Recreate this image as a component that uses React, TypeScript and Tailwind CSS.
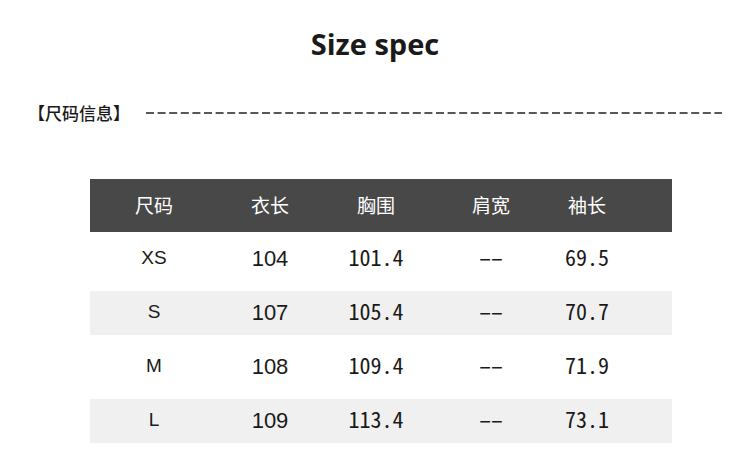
import { FC } from "react";

const rows = [
  { size: "XS", len: "104", chest: "101.4", shoulder: "––", sleeve: "69.5" },
  { size: "S", len: "107", chest: "105.4", shoulder: "––", sleeve: "70.7" },
  { size: "M", len: "108", chest: "109.4", shoulder: "––", sleeve: "71.9" },
  { size: "L", len: "109", chest: "113.4", shoulder: "––", sleeve: "73.1" },
];

const heads = ["尺码", "衣长", "胸围", "肩宽", "袖长"];

const cols = "grid grid-cols-[128px_104px_108px_122px_70px_1fr] items-center";
const num = "text-center text-[22px] leading-[30px] pb-[5px] font-['Noto_Sans_Mono_CJK_SC','Liberation_Mono',monospace]";

const App: FC = () => {
  return (
    <div className="w-[750px] h-[468px] bg-white text-[#1a1a1a] overflow-hidden">
      <h1 className="pt-[24px] text-center text-[29px] leading-[40px] font-bold font-['Open_Sans',sans-serif]">
        Size spec
      </h1>
      <div className="flex items-center mt-[36px] pl-[28px] pr-[28px]">
        <span className="text-[17px] font-medium font-['Noto_Sans_CJK_SC',sans-serif]">【尺码信息】</span>
        <svg className="flex-1 ml-[16px] h-[4px]" preserveAspectRatio="none">
          <line x1="0" y1="2" x2="100%" y2="2" stroke="#222" strokeWidth="1.3" strokeDasharray="8 3.6" />
        </svg>
      </div>
      <div className="mt-[53px] mx-[90px] w-[582px]">
        <div className={`${cols} h-[53px] bg-[#484848] text-white text-[19px] font-['Noto_Sans_CJK_SC',sans-serif]`}>
          {heads.map((h) => (
            <div key={h} className="text-center">{h}</div>
          ))}
        </div>
        {rows.map((r, i) => (
          <div key={r.size} className="h-[54px] flex items-center">
            <div className={`${cols} w-full h-[44px] ${i % 2 === 1 ? "bg-[#f0f0f0]" : ""}`}>
              <div className="text-center text-[19px] font-['Liberation_Sans',sans-serif]">{r.size}</div>
              <div className="text-center text-[22px] font-['Liberation_Sans',sans-serif]">{r.len}</div>
              <div className={num}>{r.chest}</div>
              <div className={num}>{r.shoulder}</div>
              <div className={num}>{r.sleeve}</div>
            </div>
          </div>
        ))}
      </div>
    </div>
  );
};

export default App;
